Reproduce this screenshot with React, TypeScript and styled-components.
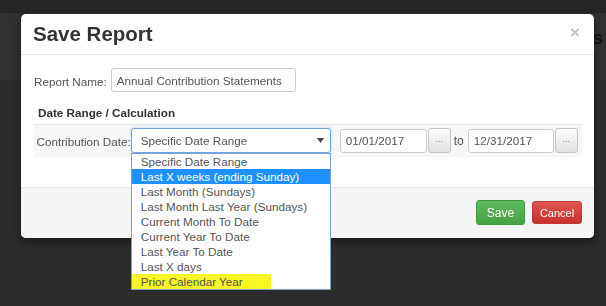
import React from "react";
import styled, { createGlobalStyle } from "styled-components";

const GlobalStyle = createGlobalStyle`
  html, body {
    margin: 0;
    padding: 0;
    background: #2c2c2c;
    font-family: "Liberation Sans", Arial, sans-serif;
  }
`;

const OPTIONS = [
  "Specific Date Range",
  "Last X weeks (ending Sunday)",
  "Last Month (Sundays)",
  "Last Month Last Year (Sundays)",
  "Current Month To Date",
  "Current Year To Date",
  "Last Year To Date",
  "Last X days",
  "Prior Calendar Year",
];

const SaveReportModal: React.FC = () => {
  return (
    <>
      <GlobalStyle />
      <Page>
        <NavBar />
        <SubHeader>
          <PageTitle>s</PageTitle>
        </SubHeader>
      </Page>
      <Backdrop>
        <Dialog>
          <Header>
            <Title>Save Report</Title>
            <Close>×</Close>
          </Header>
          <Body>
            <NameRow>
              <Label>Report Name:</Label>
              <TextInput $width={185} defaultValue="Annual Contribution Statements" />
            </NameRow>
            <SectionTitle>Date Range / Calculation</SectionTitle>
            <DateRow>
              <Label>Contribution Date:</Label>
              <SelectWrap>
                <SelectBox>
                  <span>Specific Date Range</span>
                  <svg width="7" height="5" viewBox="0 0 7 5">
                    <path d="M0 0 L7 0 L3.5 5 Z" fill="#444" />
                  </svg>
                </SelectBox>
                <OptionList>
                  {OPTIONS.map((opt, i) => (
                    <Option key={opt} $active={i === 1}>
                      {i === OPTIONS.length - 1 ? <Marker>{opt}</Marker> : opt}
                    </Option>
                  ))}
                </OptionList>
              </SelectWrap>
              <DateGroup>
                <TextInput $width={87} defaultValue="01/01/2017" />
                <PickButton>...</PickButton>
              </DateGroup>
              <ToLabel>to</ToLabel>
              <DateGroup>
                <TextInput $width={86} defaultValue="12/31/2017" />
                <PickButton>...</PickButton>
              </DateGroup>
            </DateRow>
          </Body>
          <Footer>
            <ActionButton $variant="save">Save</ActionButton>
            <ActionButton $variant="cancel">Cancel</ActionButton>
          </Footer>
        </Dialog>
      </Backdrop>
    </>
  );
};

const Page = styled.div`
  width: 606px;
  height: 306px;
  background: #2c2c2c;
`;

const NavBar = styled.div`
  height: 13px;
  background: #262626;
`;

const SubHeader = styled.div`
  height: 67px;
  background: #313131;
  display: flex;
  justify-content: flex-end;
  align-items: flex-start;
`;

const PageTitle = styled.h1`
  margin: 14px 3px 0 0;
  font-size: 19px;
  font-weight: bold;
  color: #141414;
`;

const Backdrop = styled.div`
  position: fixed;
  inset: 0;
  padding: 14px 0 0 21px;
`;

const Dialog = styled.div`
  width: 573px;
  background: #fff;
  border-radius: 5px;
  overflow: visible;
  box-shadow: 0 3px 8px rgba(0, 0, 0, 0.5);
`;

const Header = styled.div`
  height: 40px;
  border-bottom: 1px solid #e8e8e8;
  display: flex;
  align-items: center;
  justify-content: space-between;
  padding: 0 14px 0 12px;
`;

const Title = styled.h3`
  margin: 0;
  font-size: 20.5px;
  font-weight: bold;
  color: #333;
`;

const Close = styled.span`
  font-size: 17px;
  font-weight: bold;
  color: #c4c4c4;
  margin-top: -3px;
`;

const Body = styled.div`
  padding: 13px 12px 30px 13px;
`;

const NameRow = styled.div`
  display: flex;
  align-items: center;
  gap: 4px;
`;

const Label = styled.span`
  font-size: 11.7px;
  color: #555;
  white-space: nowrap;
  padding-top: 2px;
`;

const TextInput = styled.input<{ $width: number }>`
  box-sizing: border-box;
  width: ${(p) => p.$width}px;
  height: 24px;
  border: 1px solid #ccc;
  border-radius: 3px;
  padding: 0 5px;
  font-family: inherit;
  font-size: 11.7px;
  color: #555;
  background: #fff;
  outline: none;
`;

const SectionTitle = styled.div`
  margin: 13px 0 3px 4px;
  line-height: 16px;
  font-size: 11.7px;
  font-weight: bold;
  color: #333;
`;

const DateRow = styled.div`
  width: 548px;
  box-sizing: border-box;
  border-top: 1px solid #e2e2e2;
  background: #f7f7f7;
  padding: 3px 3px 4px 3px;
  margin-left: -0.5px;
  display: flex;
  align-items: center;
`;

const SelectWrap = styled.div`
  position: relative;
  margin-right: 9px;
`;

const SelectBox = styled.div`
  box-sizing: border-box;
  width: 200px;
  height: 25px;
  border: 1px solid #6fa3de;
  border-radius: 3px;
  background: #fff;
  box-shadow: 0 0 3px rgba(102, 175, 233, 0.45);
  display: flex;
  align-items: center;
  justify-content: space-between;
  padding: 0 6px 0 9px;
  font-size: 11.7px;
  color: #555;
`;

const OptionList = styled.ul`
  position: absolute;
  top: 100%;
  left: 0;
  width: 200px;
  box-sizing: border-box;
  margin: 0;
  padding: 0;
  list-style: none;
  background: #fff;
  border: 1px solid #7f9fd6;
  z-index: 2;
`;

const Option = styled.li<{ $active?: boolean }>`
  height: 15px;
  line-height: 15px;
  padding-left: 9px;
  font-size: 11.7px;
  color: ${(p) => (p.$active ? "#fff" : "#555")};
  background: ${(p) => (p.$active ? "#1e90ff" : "transparent")};
  white-space: nowrap;
`;

const Marker = styled.span`
  display: inline-block;
  width: 130px;
  margin-left: -9px;
  padding-left: 9px;
  background: #f9f626;
  color: #555;
`;

const DateGroup = styled.div`
  display: flex;
  align-items: center;
  gap: 1px;
`;

const PickButton = styled.button`
  box-sizing: border-box;
  width: 23px;
  height: 25px;
  border: 1px solid #c6c6c6;
  border-radius: 3px;
  background: linear-gradient(#fbfbfb, #e2e2e2);
  color: #777;
  font-size: 9px;
  padding: 0 0 4px;
  font-family: inherit;
`;

const ToLabel = styled.span`
  font-size: 12px;
  color: #555;
  margin: 0 4px 0 3px;
`;

const Footer = styled.div`
  border-top: 1px solid #e6e6e6;
  background: #f5f5f5;
  border-radius: 0 0 5px 5px;
  padding: 12px 12px 13px;
  display: flex;
  justify-content: flex-end;
  align-items: center;
  gap: 7px;
`;

const ActionButton = styled.button<{ $variant: "save" | "cancel" }>`
  box-sizing: border-box;
  height: ${(p) => (p.$variant === "save" ? 25 : 23)}px;
  width: ${(p) => (p.$variant === "save" ? 49 : 50)}px;
  border-radius: 3px;
  border: 1px solid ${(p) => (p.$variant === "save" ? "#3f9a3f" : "#c23a36")};
  background: ${(p) =>
    p.$variant === "save"
      ? "linear-gradient(#5fbb5f, #45a245)"
      : "linear-gradient(#e05450, #c7302c)"};
  color: #fff;
  font-family: inherit;
  font-size: ${(p) => (p.$variant === "save" ? 12 : 11)}px;
  padding: 0;
`;

export default SaveReportModal;
